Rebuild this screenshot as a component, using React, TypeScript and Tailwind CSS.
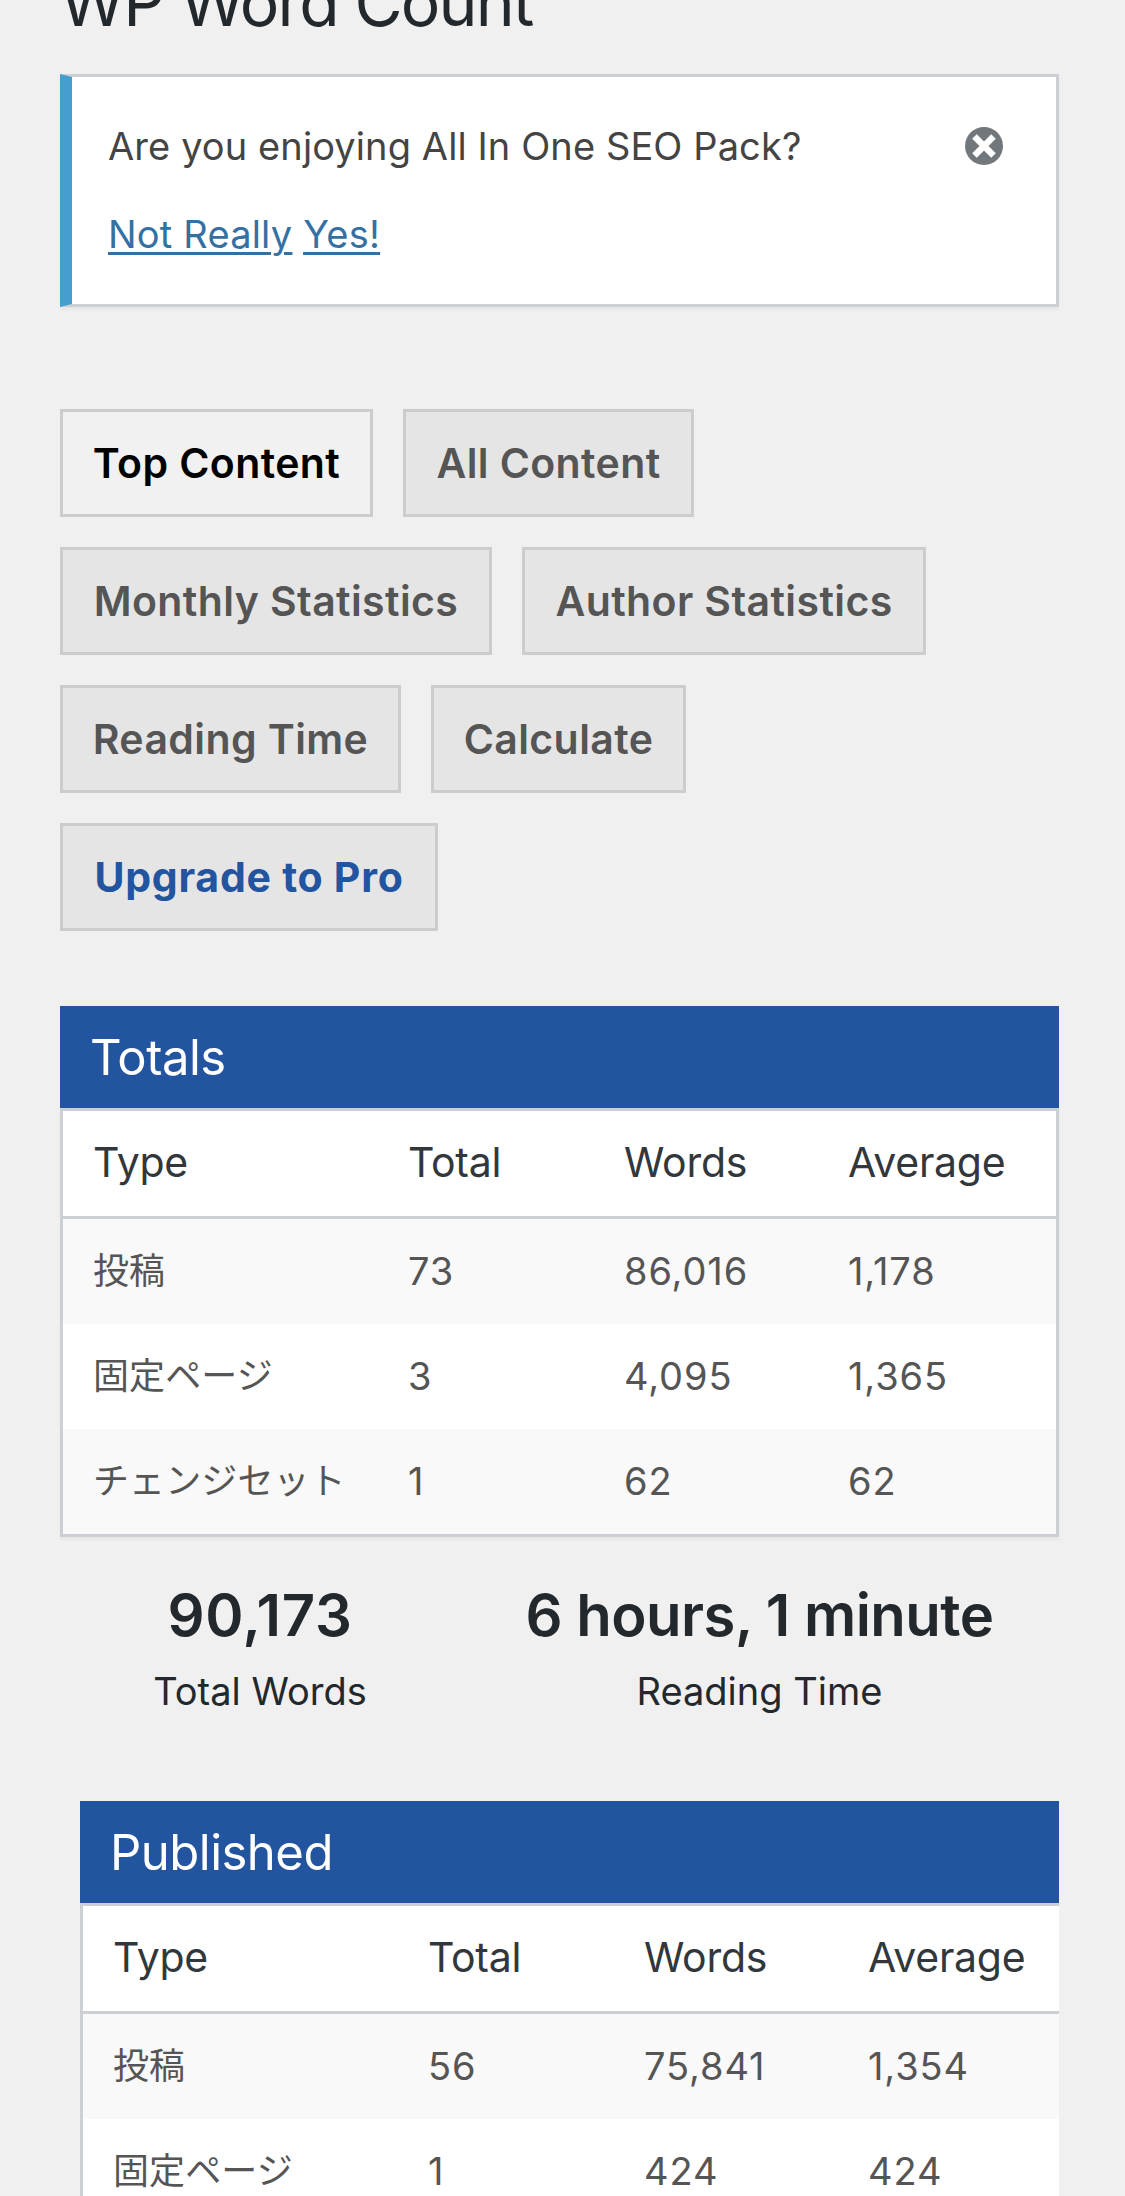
import clsx from "clsx";

type Row = {
  type: string;
  total: string;
  words: string;
  average: string;
};

const tabs = [
  { label: "Top Content", width: "w-[313px]", active: true },
  { label: "All Content", width: "w-[291px]" },
  { label: "Monthly Statistics", width: "w-[432px]" },
  { label: "Author Statistics", width: "w-[404px]" },
  { label: "Reading Time", width: "w-[341px]" },
  { label: "Calculate", width: "w-[255px]" },
  { label: "Upgrade to Pro", width: "w-[378px]", pro: true },
];

const totals: Row[] = [
  { type: "投稿", total: "73", words: "86,016", average: "1,178" },
  { type: "固定ページ", total: "3", words: "4,095", average: "1,365" },
  { type: "チェンジセット", total: "1", words: "62", average: "62" },
];

const published: Row[] = [
  { type: "投稿", total: "56", words: "75,841", average: "1,354" },
  { type: "固定ページ", total: "1", words: "424", average: "424" },
];

const DismissIcon = () => (
  <svg width="38" height="38" viewBox="0 0 38 38">
    <circle cx="19" cy="19" r="19" fill="#72777c" />
    <path
      d="M9.5 9.5L28.5 28.5M28.5 9.5L9.5 28.5"
      stroke="#fff"
      strokeWidth="6.4"
    />
  </svg>
);

const Notice = () => (
  <div className="flex h-[233px] justify-between border-[3px] border-l-[12px] border-[#ccd0d4] border-l-[#469dcf] bg-white pt-[39px] pr-[53px] pl-9 text-[38px] leading-[60px] shadow-[0_3px_3px_rgba(0,0,0,0.04)]">
    <div className="text-[#444]">
      <p className="tracking-[0.1px]">Are you enjoying All In One SEO Pack?</p>
      <p className="mt-7 flex gap-[11px] tracking-[0.2px] text-[#3570a3] underline decoration-[2.5px] underline-offset-[4px]">
        <a>Not Really</a>
        <a>Yes!</a>
      </p>
    </div>
    <button className="mt-[11px] h-[38px]">
      <DismissIcon />
    </button>
  </div>
);

const WordTable = ({
  title,
  rows,
  clipped,
}: {
  title: string;
  rows: Row[];
  clipped?: boolean;
}) => (
  <section className={clsx(clipped && "ml-5 overflow-hidden")}>
    <h2 className="h-[102px] bg-[#23549f] pl-[30px] text-[49px] leading-[103px] tracking-[-0.5px] text-white">
      {title}
    </h2>
    <div className="w-[999px] border-[3px] border-[#ccd0d4] bg-white shadow-[0_3px_3px_rgba(0,0,0,0.04)]">
      <div className="grid h-[108px] grid-cols-[315px_216px_224px_238px] border-b-[3px] border-[#ccd0d4] text-[41px] leading-[103px] tracking-[-0.25px] text-[#32373c] *:pl-[30px]">
        <div>Type</div>
        <div>Total</div>
        <div>Words</div>
        <div>Average</div>
      </div>
      {rows.map((row) => (
        <div
          key={row.type}
          className="grid h-[105px] grid-cols-[315px_216px_224px_238px] text-[38px] leading-[105px] tracking-[0.9px] text-[#555] odd:bg-white even:bg-[#f9f9f9] *:pl-[30px]"
        >
          <div className="text-[36px] tracking-[0.1px] whitespace-nowrap">
            {row.type}
          </div>
          <div>{row.total}</div>
          <div>{row.words}</div>
          <div>{row.average}</div>
        </div>
      ))}
    </div>
  </section>
);

const Stat = ({
  value,
  label,
  className,
}: {
  value: string;
  label: string;
  className: string;
}) => (
  <div className="text-center">
    <div className={clsx("text-[58px] leading-[76px] font-semibold", className)}>
      {value}
    </div>
    <div className="text-[38px] leading-[76px]">{label}</div>
  </div>
);

const App = () => {
  return (
    <div className="h-[2196px] overflow-hidden bg-[#f0f0f0] pr-[66px] pl-[60px] font-['Inter','Noto_Sans_CJK_JP',sans-serif] text-[#23282d]">
      <h1 className="-mt-[43px] mb-[27px] text-[66px] leading-[90px] tracking-[-1.9px]">
        WP Word Count
      </h1>
      <Notice />
      <nav className="mt-[102px] flex flex-wrap gap-[30px]">
        {tabs.map((tab) => (
          <a
            key={tab.label}
            className={clsx(
              "h-[108px] border-[3px] border-[#ccc] text-center text-[41px] leading-[102px] whitespace-nowrap",
              tab.width,
              tab.active &&
                "bg-[#f1f1f1] font-semibold tracking-[0.4px] text-black",
              tab.pro &&
                "bg-[#e5e5e5] font-bold tracking-[0.75px] text-[#23549f]",
              !tab.active &&
                !tab.pro &&
                "bg-[#e5e5e5] font-semibold tracking-[0.4px] text-[#555]"
            )}
          >
            {tab.label}
          </a>
        ))}
      </nav>
      <div className="mt-[75px]">
        <WordTable title="Totals" rows={totals} />
      </div>
      <div className="mt-10 mb-[72px] grid grid-cols-[400px_599px]">
        <Stat
          value="90,173"
          label="Total Words"
          className="tracking-[0.7px]"
        />
        <Stat
          value="6 hours, 1 minute"
          label="Reading Time"
          className="tracking-[-0.5px]"
        />
      </div>
      <WordTable title="Published" rows={published} clipped />
    </div>
  );
};

export default App;
